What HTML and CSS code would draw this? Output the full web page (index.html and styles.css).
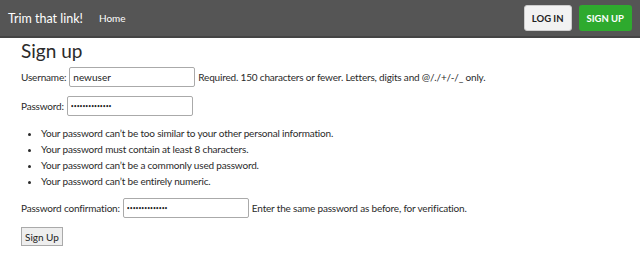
FILE: index.html
```html
<!doctype html>
<html>
<head>
    <meta charset="utf-8">
    <title>Sign up - Trim that link!</title>
    <link rel="stylesheet" href="styles.css">
</head>
<body class="site-body">
    <nav class="site-nav">
        <a class="site-brand" href="#">Trim that link!</a>
        <a class="site-nav-link" href="#">Home</a>
        <div class="site-nav-right">
            <a class="nav-button nav-button-login" href="#">Log in</a>
            <a class="nav-button nav-button-signup" href="#">Sign up</a>
        </div>
    </nav>

    <main class="site-content">
        <h2 class="page-title">Sign up</h2>
        <form class="signup-form" action="#" method="post">
            <p class="form-row">
                <label for="id_username">Username:</label>
                <input id="id_username" class="form-input" type="text" value="newuser">
                <span class="helptext">Required. 150 characters or fewer. Letters, digits and @/./+/-/_ only.</span>
            </p>
            <p class="form-row">
                <label for="id_password1">Password:</label>
                <input id="id_password1" class="form-input form-input-secret" type="password" value="secretpassword">
            </p>
            <ul class="help-list">
                <li>Your password can’t be too similar to your other personal information.</li>
                <li>Your password must contain at least 8 characters.</li>
                <li>Your password can’t be a commonly used password.</li>
                <li>Your password can’t be entirely numeric.</li>
            </ul>
            <p class="form-row">
                <label for="id_password2">Password confirmation:</label>
                <input id="id_password2" class="form-input form-input-secret" type="password" value="secretpassword">
                <span class="helptext">Enter the same password as before, for verification.</span>
            </p>
            <button class="submit-button" type="submit">Sign Up</button>
        </form>
    </main>
</body>
</html>
```

FILE: styles.css
```css
.site-body {
    margin: 0;
    font-family: "Lato", "Open Sans", sans-serif;
    font-size: 10px;
    color: #2a2a2a;
    background: #fff;
}

.site-nav {
    display: flex;
    align-items: center;
    height: 36px;
    padding: 0 8px;
    background: #555;
    border-bottom: 2px solid #444;
}

.site-nav a {
    text-decoration: none;
}

.site-brand {
    color: #fff;
    font-size: 12.5px;
    margin-right: 16px;
}

.site-nav-link {
    color: #fff;
    font-size: 10px;
}

.site-nav-right {
    display: flex;
    gap: 7px;
    margin-left: auto;
}

.nav-button {
    display: flex;
    align-items: center;
    height: 26px;
    padding: 0 8px;
    border-radius: 3px;
    font-size: 9.5px;
    font-weight: bold;
    text-transform: uppercase;
    box-sizing: border-box;
}

.nav-button-login {
    padding: 0 7px;
    background: #f2f2f2;
    color: #222;
    border: 1px solid #ccc;
}

.nav-button-signup {
    background: #2eaa2e;
    color: #fff;
}

.site-content {
    padding: 1px 21px;
}

.page-title {
    margin: 0 0 4px;
    font-size: 19px;
    font-weight: normal;
    line-height: 24px;
}

.signup-form {
    margin: 0;
    letter-spacing: -0.18px;
}

.form-row {
    display: flex;
    align-items: center;
    gap: 3px;
    margin: 0 0 9px;
}

.form-input {
    width: 126px;
    height: 20px;
    padding: 0 3px;
    box-sizing: border-box;
    border: 1px solid #aaa;
    border-radius: 2px;
    font-family: inherit;
    font-size: 10px;
    color: #222;
}

.form-input-secret {
    font-size: 5px;
    letter-spacing: 0;
}

.help-list {
    margin: 0 0 9px;
    padding-left: 20px;
    line-height: 16px;
}

.submit-button {
    height: 19px;
    padding: 0 3px;
    font-family: inherit;
    font-size: 10px;
    color: #222;
    background: #eee;
    border: 1px solid #aaa;
    border-radius: 0;
}
```
